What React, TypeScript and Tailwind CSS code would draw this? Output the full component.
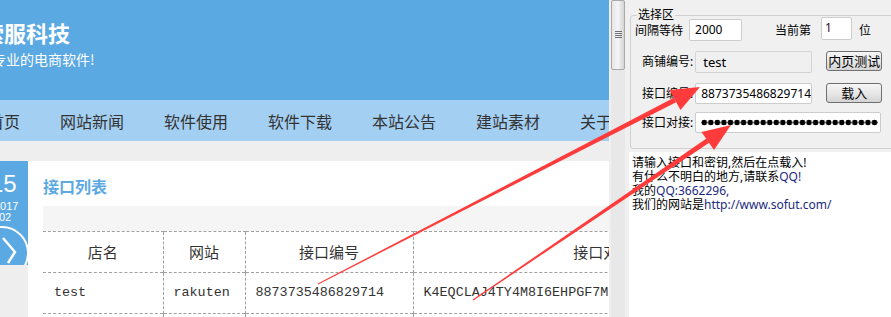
const navItems = ["首页", "网站新闻", "软件使用", "软件下载", "本站公告", "建站素材", "关于我们"];

const Website = () => {
  return (
    <div className="w-[609px] h-full shrink-0 overflow-hidden bg-[#eeeeee] font-['Noto_Sans_CJK_SC',sans-serif]">
      <div className="h-[100px] bg-[#5ba9e2] text-white whitespace-nowrap">
        <div className="pt-[18px] -ml-[18px] text-[22px] leading-[28px] font-bold">索服科技</div>
        <div className="mt-[4px] -ml-[8px] text-[14px] leading-[18px]">专业的电商软件!</div>
      </div>
      <div className="h-[41px] bg-[#a3cff3] flex items-center gap-[40px] -ml-[12px] whitespace-nowrap">
        {navItems.map((item) => (
          <span key={item} className="text-[16px] leading-[20px] text-[#333]">
            {item}
          </span>
        ))}
      </div>
      <div className="h-[20px]"></div>
      <div className="flex">
        <div className="w-[28px] h-[104px] shrink-0 bg-[#5ba9e2] overflow-hidden text-white font-['Liberation_Sans',sans-serif] whitespace-nowrap">
          <div className="pt-[9px] -ml-[10px] text-[24px] leading-[28px]">15</div>
          <div className="mt-[3px] -ml-[6px] text-[11px] leading-[11px]">2017</div>
          <div className="-ml-[1px] text-[11px] leading-[11px]">02</div>
          <svg className="mt-[2px] block" width="28" height="42" viewBox="0 0 28 42">
            <circle cx="2" cy="28" r="26" fill="none" stroke="white" strokeWidth="2" />
            <path d="M3 13 L15 27 L8 38" fill="none" stroke="white" strokeWidth="2.5" />
          </svg>
        </div>
        <div className="flex-1 h-[156px] bg-white pl-[15px] pt-[15px] overflow-hidden">
          <div className="text-[16px] leading-[20px] font-bold text-[#5ba9e2]">接口列表</div>
          <div className="mt-[10px] h-[25px] bg-[#f5f5f5]"></div>
          <table className="table-fixed border-collapse w-[750px]">
            <colgroup>
              <col className="w-[120px]" />
              <col className="w-[82px]" />
              <col className="w-[168px]" />
              <col className="w-[380px]" />
            </colgroup>
            <tbody>
              <tr className="h-[41px] text-[15px] text-[#333] text-center">
                <td className="border-t border-dashed border-[#a0a0a0]">店名</td>
                <td className="border-t border-l border-dashed border-[#a0a0a0]">网站</td>
                <td className="border-t border-l border-dashed border-[#a0a0a0]">接口编号</td>
                <td className="border-t border-l border-dashed border-[#a0a0a0]">接口对接</td>
              </tr>
              <tr className="h-[41px] text-[13.4px] text-[#333] font-['Liberation_Mono',monospace] whitespace-nowrap">
                <td className="pl-[11px] border-t border-dashed border-[#a0a0a0]">test</td>
                <td className="pl-[10px] border-t border-l border-dashed border-[#a0a0a0]">rakuten</td>
                <td className="pl-[10px] border-t border-l border-dashed border-[#a0a0a0]">8873735486829714</td>
                <td className="pl-[10px] border-t border-l border-dashed border-[#a0a0a0] overflow-hidden">K4EQCLAJ4TY4M8I6EHPGF7M5W2RB</td>
              </tr>
              <tr className="h-[20px]">
                <td className="border-t border-dashed border-[#a0a0a0]"></td>
                <td className="border-t border-l border-dashed border-[#a0a0a0]"></td>
                <td className="border-t border-l border-dashed border-[#a0a0a0]"></td>
                <td className="border-t border-l border-dashed border-[#a0a0a0]"></td>
              </tr>
            </tbody>
          </table>
        </div>
      </div>
    </div>
  );
};

const Scrollbar = () => (
  <div className="w-[17px] h-full shrink-0 pl-[2px] pr-[1px] bg-[#f0f0f0]">
    <div className="h-full bg-[#e8e8e8]">
      <div className="h-[70px] border border-[#a9a9a9] rounded-[2px] bg-gradient-to-r from-[#e6e6e6] via-[#f5f5f5] to-[#d4d4d4] flex flex-col items-center gap-[1px] pt-[30px]">
        <div className="w-[7px] h-[1px] bg-[#6f6f6f]"></div>
        <div className="w-[7px] h-[1px] bg-[#6f6f6f]"></div>
        <div className="w-[7px] h-[1px] bg-[#6f6f6f]"></div>
        <div className="w-[7px] h-[1px] bg-[#6f6f6f]"></div>
      </div>
    </div>
  </div>
);

const WinButton = ({ label }: { label: string }) => (
  <div className="ml-[14px] w-[56px] h-[20px] border border-[#707070] rounded-[3px] bg-gradient-to-b from-[#f6f6f6] via-[#e8e8e8] to-[#d4d4d4] flex items-center justify-center text-[13px] leading-[16px] text-black font-['Noto_Sans_CJK_SC',sans-serif]">
    {label}
  </div>
);

const RightPanel = () => (
  <div className="flex-1 h-full flex flex-col overflow-hidden bg-[#f0f0f0] text-[12px] text-black font-['Noto_Sans','Noto_Sans_CJK_SC',sans-serif] whitespace-nowrap">
    <div className="relative ml-[4px] mt-[15px] h-[134px] w-[280px] shrink-0 border border-[#d0d0d0] rounded-[3px]">
      <span className="absolute left-[6px] -top-[9px] px-[1px] bg-[#f0f0f0] leading-[16px]">选择区</span>
      <div className="flex items-start mt-[1px] h-[25px]">
        <span className="ml-[4px] mt-[6px] leading-[16px]">间隔等待</span>
        <div className="ml-[6px] mt-[2px] w-[53px] h-[22px] bg-white border border-[#cccccc] rounded-[2px] pl-[5px] leading-[20px]">2000</div>
        <span className="ml-[33px] mt-[6px] leading-[16px]">当前第</span>
        <div className="ml-[10px] w-[31px] h-[23px] bg-white border border-[#cccccc] rounded-[2px] pl-[3px] leading-[20px] text-[#3a0a2a]">1</div>
        <span className="ml-[7px] mt-[6px] leading-[16px]">位</span>
      </div>
      <div className="flex items-start mt-[9px] h-[22px]">
        <span className="ml-[11px] mt-[3px] leading-[16px]">商铺编号:</span>
        <div className="ml-[2px] w-[117px] h-[22px] bg-[#f0f0f0] border border-[#d4d4d4] rounded-[2px] pl-[7px] leading-[20px] text-[13px]">test</div>
        <WinButton label="内页测试" />
      </div>
      <div className="flex items-start mt-[10px] h-[21px]">
        <span className="ml-[11px] mt-[3px] leading-[16px]">接口编号:</span>
        <div className="ml-[2px] w-[117px] h-[21px] bg-white border border-[#cccccc] rounded-[2px] pl-[5px] leading-[19px] overflow-hidden">8873735486829714</div>
        <WinButton label="载入" />
      </div>
      <div className="flex items-start mt-[8px] h-[21px]">
        <span className="ml-[11px] mt-[3px] leading-[16px]">接口对接:</span>
        <div className="ml-[2px] w-[186px] h-[21px] bg-white border border-[#cccccc] rounded-[2px] pl-[5px] pr-[2px] flex items-center">
          <div className="w-full h-[7px] bg-[radial-gradient(circle_at_center,#000_2.6px,transparent_3.1px)] bg-[length:6.55px_7px] bg-repeat-x"></div>
        </div>
      </div>
    </div>
    <div className="ml-[3px] mt-[3px] flex-1 bg-white pt-[4px] pl-[3px] leading-[14px]">
      <div>请输入接口和密钥,然后在点载入!</div>
      <div>
        有什么不明白的地方,请联系<span className="text-[#1c2a80]">QQ!</span>
      </div>
      <div>
        我的<span className="text-[#1c2a80]">QQ:3662296,</span>
      </div>
      <div>
        我们的网站是<span className="text-[#1c2a80]">http://www.sofut.com/</span>
      </div>
    </div>
  </div>
);

const Arrows = () => (
  <svg className="absolute inset-0 pointer-events-none" width="891" height="317" viewBox="0 0 891 317">
    <polygon points="318.2,284.4 676.1,102.2 673.9,97.8 317.8,283.6" fill="#ff3b3b" />
    <polygon points="700,87 680.5,110 669.5,90" fill="#ff3b3b" />
    <polygon points="473.3,300.4 709.2,142.8 706.4,138.6 472.7,299.6" fill="#ff3b3b" />
    <polygon points="731,125 714,150 701.5,132" fill="#ff3b3b" />
  </svg>
);

export default function App() {
  return (
    <div className="relative w-[891px] h-[317px] overflow-hidden flex bg-[#f0f0f0]">
      <Website />
      <Scrollbar />
      <RightPanel />
      <Arrows />
    </div>
  );
}
